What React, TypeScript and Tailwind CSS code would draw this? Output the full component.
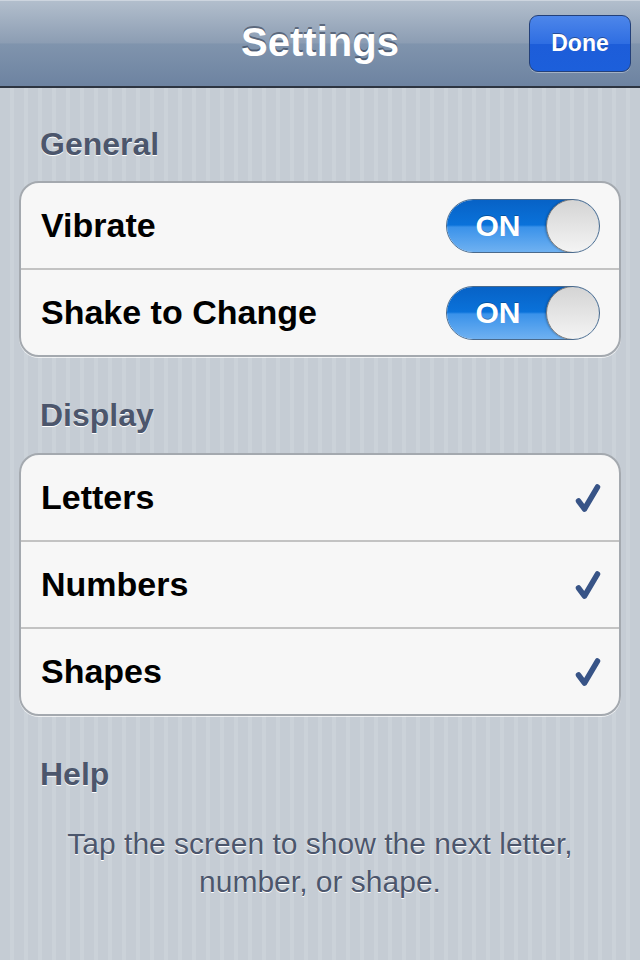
import React, { useState } from 'react'

const font = "font-['Liberation_Sans','Helvetica',Arial,sans-serif]"

const Check: React.FC = () => (
  <svg width="28" height="30" viewBox="0 0 28 30" className="shrink-0 mr-[-2px]">
    <path
      d="M4.5 18 L10.5 26 L23.5 4"
      fill="none"
      stroke="#385487"
      strokeWidth="5.5"
      strokeLinecap="round"
      strokeLinejoin="round"
    />
  </svg>
)

const Toggle: React.FC<{ on: boolean; onClick: () => void }> = ({ on, onClick }) => (
  <button
    type="button"
    onClick={onClick}
    className="relative w-[154px] h-[54px] rounded-full border border-[#4a6a8c] overflow-hidden shrink-0"
  >
    <div
      className={
        on
          ? 'absolute inset-0 bg-[linear-gradient(to_bottom,#0762c6_0%,#0a72da_48%,#3a92ea_52%,#6fb1f1_100%)]'
          : 'absolute inset-0 bg-[linear-gradient(to_bottom,#d8d8d8_0%,#f0f0f0_50%,#fbfbfb_100%)]'
      }
    />
    <span
      className={
        on
          ? 'absolute left-0 w-[102px] top-0 h-full flex items-center justify-center text-white font-bold text-[30px] [text-shadow:0_-1px_0_rgba(0,0,0,0.25)]'
          : 'absolute right-0 w-[102px] top-0 h-full flex items-center justify-center text-[#7f7f7f] font-bold text-[30px]'
      }
    >
      {on ? 'ON' : 'OFF'}
    </span>
    <div
      className={
        on
          ? 'absolute right-[-1px] top-[-1px] w-[54px] h-[54px] rounded-full border border-[#7b7b7b] bg-[linear-gradient(to_bottom,#d4d4d4,#f4f4f4)] shadow-[-1px_0_2px_rgba(0,0,0,0.25)]'
          : 'absolute left-[-1px] top-[-1px] w-[54px] h-[54px] rounded-full border border-[#7b7b7b] bg-[linear-gradient(to_bottom,#d4d4d4,#f4f4f4)] shadow-[1px_0_2px_rgba(0,0,0,0.25)]'
      }
    />
  </button>
)

const Header: React.FC<{ title: string; className?: string }> = ({ title, className }) => (
  <div
    className={
      'h-[40px] pl-[21px] flex items-center text-[32px] font-bold text-[#4c566c] [text-shadow:0_1px_0_#ffffff] ' +
      (className || '')
    }
  >
    {title}
  </div>
)

const Row: React.FC<{ label: string; last?: boolean; children?: React.ReactNode }> = ({
  label,
  last,
  children,
}) => (
  <div
    className={
      last
        ? 'h-[85px] flex items-center justify-between pl-[20px] pr-[19px]'
        : 'h-[87px] flex items-center justify-between pl-[20px] pr-[19px] border-b-2 border-[#c3c3c3]'
    }
  >
    <span className="text-[34px] font-bold text-black">{label}</span>
    {children}
  </div>
)

export default function App() {
  const [vibrate, setVibrate] = useState(true)
  const [shake, setShake] = useState(true)
  const [display, setDisplay] = useState({ letters: true, numbers: true, shapes: true })

  return (
    <div
      className={
        font +
        ' w-[640px] h-[960px] overflow-hidden bg-[repeating-linear-gradient(90deg,#c5ccd4_0px,#c5ccd4_10px,#cbd2d9_10px,#cbd2d9_14px)]'
      }
    >
      {/* nav bar */}
      <div className="relative h-[88px] border-b-2 border-[#2d3541] bg-[linear-gradient(to_bottom,#b3bfcd_0%,#8c9db3_50%,#8094ad_51%,#6d83a1_100%)] flex items-center justify-center">
        <div className="absolute top-0 left-0 right-0 h-px bg-[#cdd5df]" />
        <h1 className="text-[40px] font-bold text-white [text-shadow:0_-2px_0_rgba(40,50,70,0.55)] mt-[-2px]">
          Settings
        </h1>
        <button
          type="button"
          className="absolute right-[9px] top-[15px] w-[102px] h-[57px] rounded-[9px] border border-[#23407a] bg-[linear-gradient(to_bottom,#4d86ea_0%,#2f6ee2_50%,#1d5dd9_51%,#1c5fdb_100%)] text-white font-bold text-[23px] [text-shadow:0_-1px_0_rgba(0,0,0,0.35)] shadow-[0_1px_0_rgba(255,255,255,0.35)]"
        >
          Done
        </button>
      </div>

      <div className="px-[19px]">
        <Header title="General" className="mt-[36px] mb-[17px]" />
        <div className="rounded-[20px] border-2 border-[#a4a9af] bg-[#f7f7f7] shadow-[0_1px_0_rgba(255,255,255,0.7)] overflow-hidden">
          <Row label="Vibrate">
            <Toggle on={vibrate} onClick={() => setVibrate(!vibrate)} />
          </Row>
          <Row label="Shake to Change" last>
            <Toggle on={shake} onClick={() => setShake(!shake)} />
          </Row>
        </div>

        <Header title="Display" className="mt-[38px] mb-[18px]" />
        <div className="rounded-[20px] border-2 border-[#a4a9af] bg-[#f7f7f7] shadow-[0_1px_0_rgba(255,255,255,0.7)] overflow-hidden">
          <div onClick={() => setDisplay({ ...display, letters: !display.letters })}>
            <Row label="Letters">{display.letters && <Check />}</Row>
          </div>
          <div onClick={() => setDisplay({ ...display, numbers: !display.numbers })}>
            <Row label="Numbers">{display.numbers && <Check />}</Row>
          </div>
          <div onClick={() => setDisplay({ ...display, shapes: !display.shapes })}>
            <Row label="Shapes" last>
              {display.shapes && <Check />}
            </Row>
          </div>
        </div>

        <Header title="Help" className="mt-[38px]" />
        <p className="mt-[31px] text-center text-[30px] leading-[38px] text-[#4c566c] [text-shadow:0_1px_0_#ffffff] px-[20px]">
          Tap the screen to show the next letter,
          <br />
          number, or shape.
        </p>
      </div>
    </div>
  )
}
